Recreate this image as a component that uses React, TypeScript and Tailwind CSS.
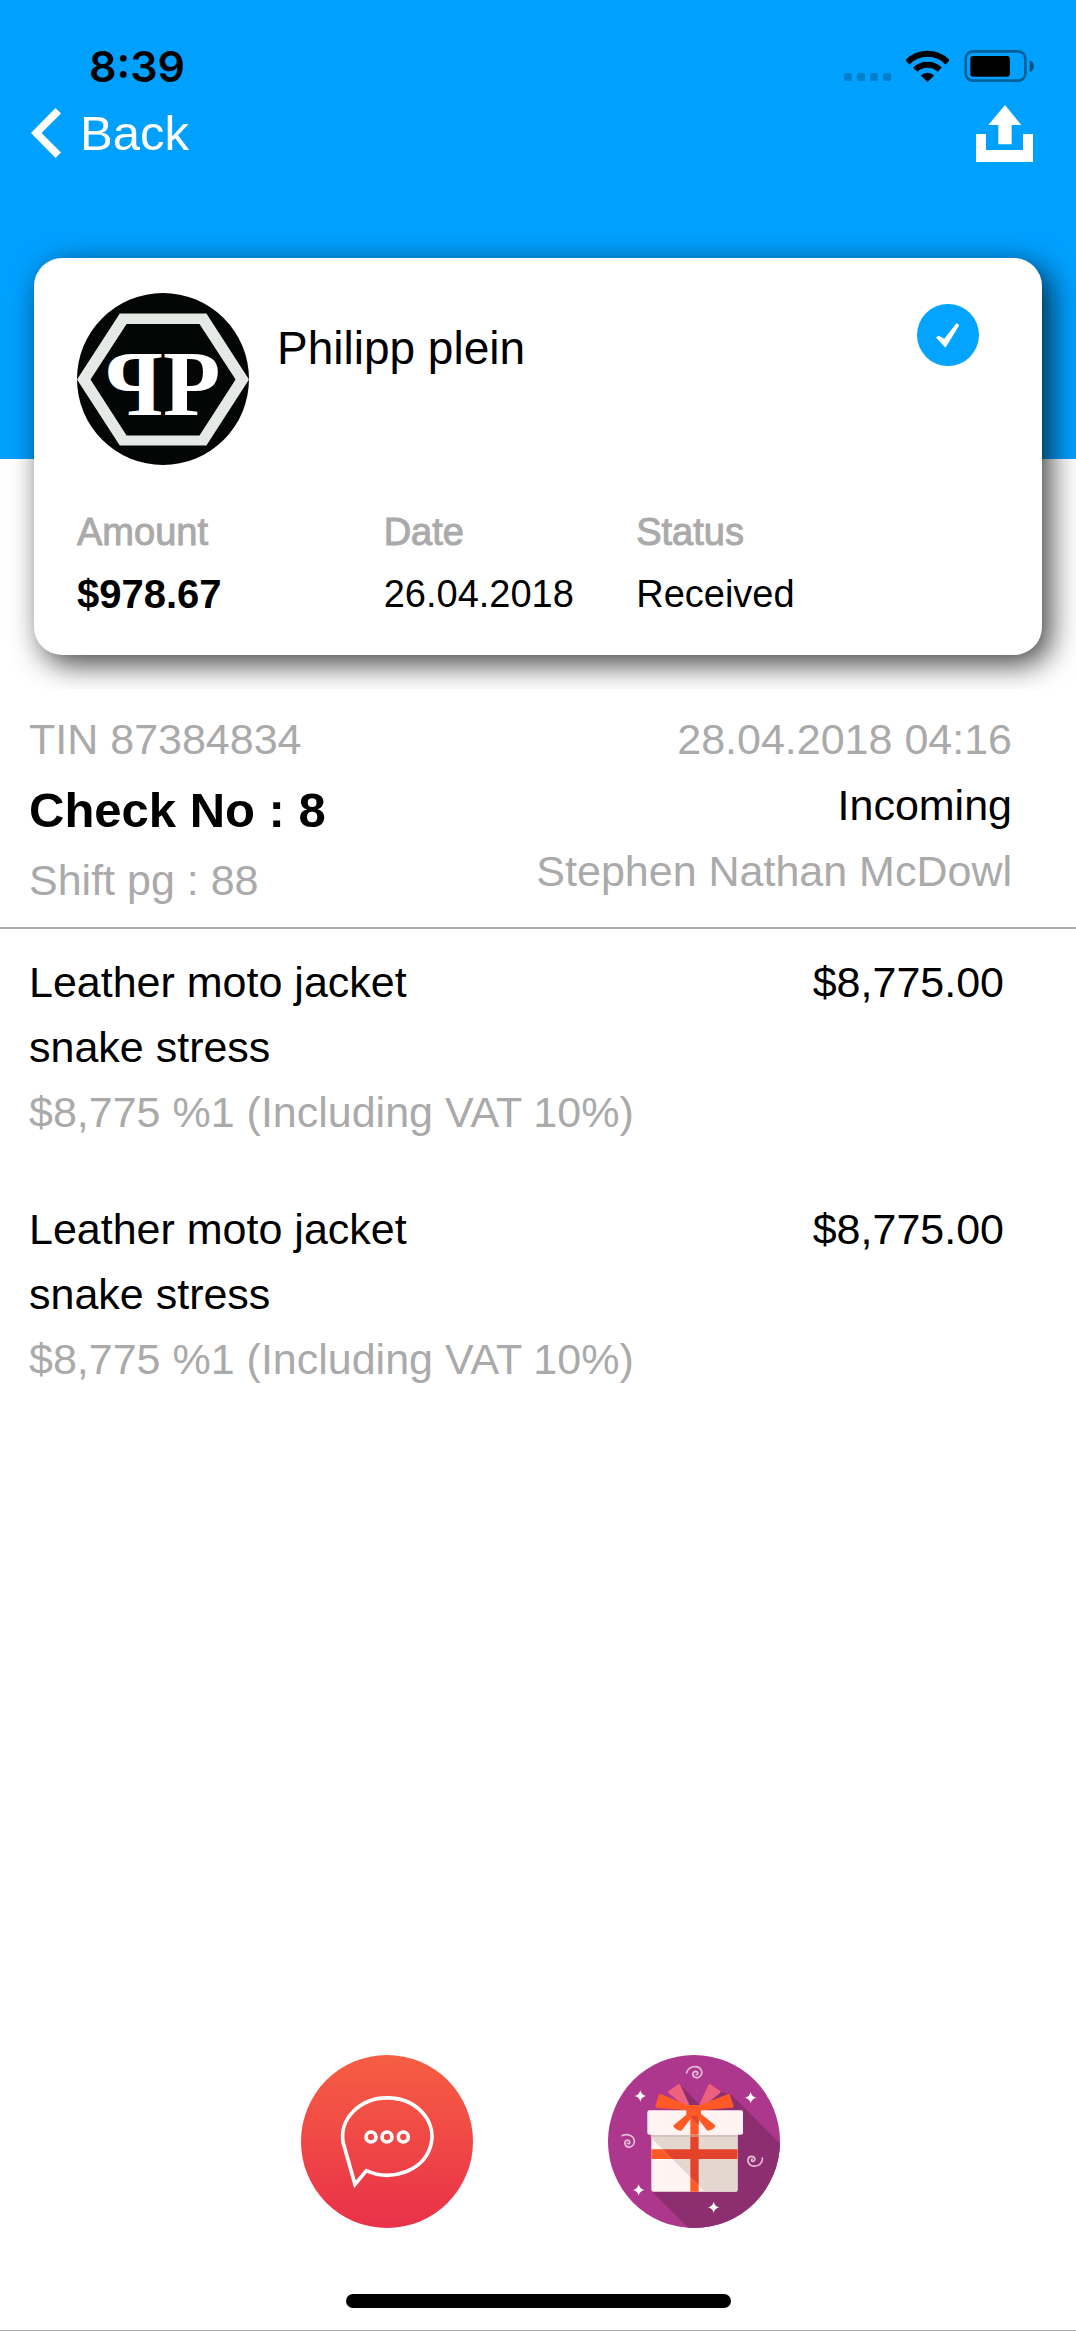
import React from "react";

const stats = [
  { label: "Amount", value: "$978.67", strong: true },
  { label: "Date", value: "26.04.2018", strong: false },
  { label: "Status", value: "Received", strong: false },
];

const items = [
  {
    id: 1,
    name: ["Leather moto jacket", "snake stress"],
    detail: "$8,775 %1 (Including VAT 10%)",
    price: "$8,775.00",
  },
  {
    id: 2,
    name: ["Leather moto jacket", "snake stress"],
    detail: "$8,775 %1 (Including VAT 10%)",
    price: "$8,775.00",
  },
];

function WifiIcon() {
  return (
    <svg viewBox="0 0 130 96" className="h-8 w-[43px]" aria-hidden="true">
      <path d="M4 37A85 85 0 0 1 126 37" fill="none" stroke="#000" strokeWidth="18" />
      <path d="M28 59A53 53 0 0 1 102 59" fill="none" stroke="#000" strokeWidth="18" />
      <path d="M65 96L45 77A28 28 0 0 1 85 77Z" />
    </svg>
  );
}

function BatteryIcon() {
  return (
    <svg viewBox="0 0 210 97" className="h-8 w-[70px]" aria-hidden="true">
      <rect x="4" y="4" width="181" height="89" rx="22" fill="none" stroke="#000" strokeOpacity="0.4" strokeWidth="8" />
      <rect x="18" y="18" width="120" height="63" rx="9" />
      <path d="M198 31Q210 36 210 49T198 67Z" fillOpacity="0.5" />
    </svg>
  );
}

function ShareIcon() {
  return (
    <svg viewBox="0 0 171 171" className="size-[57px]" fill="#fff" aria-hidden="true">
      <path d="M87 0L136 60H107V118H67V60H37Z" />
      <path d="M0 87H30V135H141V87H171V171H0Z" />
    </svg>
  );
}

function BrandLogo() {
  return (
    <svg viewBox="0 0 172 172" className="size-[172px] shrink-0" role="img" aria-label="Philipp plein logo">
      <circle cx="86" cy="86" r="86" fill="#040605" />
      <path
        d="M0 86.5L42.8 20.5H129.4L172 86.5L129.4 152.5H42.8ZM13.5 86.5L49.6 142.500H122.500L158.600 86.500L122.500 31H49.600Z"
        fill="#e6e8e5"
        fillRule="evenodd"
      />
      <g fill="#fff" fontFamily="Liberation Serif, serif" fontSize="94" fontWeight="700">
        <text x="86" y="122">P</text>
        <text x="0" y="122" transform="translate(86 0) scale(-1 1)">P</text>
      </g>
    </svg>
  );
}

function CheckBadge() {
  return (
    <svg viewBox="0 0 62 62" className="mt-[11px] ml-auto size-[62px] shrink-0" role="img" aria-label="Confirmed">
      <circle cx="31" cy="31" r="31" fill="#02a4ff" />
      <path
        d="M20 33.500L21.500 32.500L27.500 35.800L39.800 20L41.300 21.300L28.300 42.500Z"
        fill="#fff"
        stroke="#fff"
        strokeWidth="1.500"
        strokeLinejoin="round"
      />
    </svg>
  );
}

function ChatIcon() {
  return (
    <svg viewBox="63 75 516 519" className="h-[173px] w-[172px]" aria-hidden="true">
      <defs>
        <linearGradient id="chat-bg" x1="0" y1="0" x2="0" y2="1">
          <stop offset="0" stopColor="#f65e43" />
          <stop offset="1" stopColor="#e93149" />
        </linearGradient>
      </defs>
      <ellipse cx="321" cy="334.5" rx="258" ry="259.500" fill="url(#chat-bg)" />
      <g fill="none" stroke="#fff" strokeWidth="11">
        <path d="M190 340L225 463L259 422A134 116 0 1 0 190 340Z" />
        <circle cx="273" cy="321" r="15" />
        <circle cx="321" cy="321" r="15" />
        <circle cx="370" cy="321" r="15" />
      </g>
    </svg>
  );
}

const STAR = "M0-17Q3-3 17 0Q3 3 0 17Q-3 3-17 0Q-3-3 0-17Z";

function GiftIcon() {
  return (
    <svg viewBox="54 75 516 519" className="h-[173px] w-[172px]" aria-hidden="true">
      <defs>
        <clipPath id="gift-disc">
          <ellipse cx="312" cy="334.5" rx="258" ry="259.500" />
        </clipPath>
        <clipPath id="gift-shade">
          <path d="M184 314H443V485H345L184 324Z" />
        </clipPath>
      </defs>
      <g clipPath="url(#gift-disc)">
        <rect x="54" y="75" width="516" height="519" fill="#ad378c" />
        <path d="M268 162L330 225L390 184L425 195L600 371V620H322L184 483L250 300Z" fill="#8c2e70" />
      </g>

      <rect x="184" y="300" width="259" height="185" rx="6" fill="#fff4f2" />
      <path d="M184 358H443V387H184ZM301 300H326V485H301Z" fill="#ff5a26" />
      <g clipPath="url(#gift-shade)">
        <rect x="184" y="300" width="259" height="185" rx="6" fill="#e4d7cf" />
        <path d="M184 358H443V387H184ZM301 300H326V485H301Z" fill="#e2432a" />
        <rect x="184" y="314" width="259" height="7" fill="#c9b5ae" fillOpacity="0.6" />
      </g>
      <rect x="172" y="241" width="287" height="73" rx="6" fill="#fff4f2" />
      <rect x="301" y="241" width="25" height="73" fill="#ff5a26" />
      <path d="M301 258H326V284Z" fill="#e2432a" />

      <g strokeLinejoin="round" strokeWidth="8">
        <path d="M238 186L267 166L293 222H282Z" fill="#ed617f" stroke="#ed617f" />
        <path d="M388 186L359 166L333 222H344Z" fill="#ed617f" stroke="#ed617f" />
        <g fill="#ff5a26" stroke="#ff5a26">
          <path d="M200 229L210 196L290 229V237Z" />
          <path d="M427 229L416 196L333 229V237Z" />
          <path d="M254 288L294 256L300 262L272 298Q262 298 254 288Z" />
          <path d="M372 288L332 256L326 262L354 298Q364 298 372 288Z" />
        </g>
      </g>
      <rect x="289" y="225" width="44" height="33" rx="4" fill="#ff5a26" />

      <g fill="#fff">
        <path d={STAR} transform="translate(151 198)" />
        <path d={STAR} transform="translate(482 203)" />
        <path d={STAR} transform="translate(146 480)" />
        <path d={STAR} transform="translate(371 532)" />
      </g>
      <g fill="none" stroke="#e3bdd8" strokeWidth="5" strokeLinecap="round">
        <path d="M290 128C296 108 324 104 333 119C341 134 326 147 315 142C304 136 308 124 317 124C326 125 325 134 319 134" />
        <path d="M96 317C116 308 134 321 133 336C131 352 112 356 106 345C101 332 112 327 118 333C122 340 115 345 112 339" />
        <path d="M517 384C518 403 500 412 485 407C470 400 471 381 483 379C496 378 498 392 490 394C484 395 483 388 487 387" />
      </g>
    </svg>
  );
}

export default function App() {
  return (
    <div className="flex min-h-screen flex-col border-b border-[#b2b2b2] bg-white font-['Liberation_Sans',Arial,sans-serif] text-black">
      <header className="bg-[#00a0ff] pt-12 pb-[297px]">
        <div className="flex h-9 items-center pr-[42px] pl-[89px]">
          <time className="font-['Inter',sans-serif] text-[43px] leading-9 font-semibold">8:39</time>
          <div className="mr-[15px] mb-[3px] ml-auto flex gap-[5px] self-end">
            {[0, 1, 2, 3].map((dot) => (
              <span key={dot} className="size-2 rounded-[2px] bg-black/20" />
            ))}
          </div>
          <WifiIcon />
          <div className="ml-[15px] flex">
            <BatteryIcon />
          </div>
        </div>
        <nav className="mt-5 flex h-[58px] items-center justify-between pr-[43px] pl-[31px] text-white">
          <button type="button" className="flex items-center gap-[19px] text-[49px] leading-[58px]">
            <svg viewBox="0 0 30 50" className="h-[50px] w-[30px]" fill="#fff" aria-hidden="true">
              <path d="M0 25L24.500 0L30 5.500L10.500 25L30 44.500L24.500 50Z" />
            </svg>
            Back
          </button>
          <button type="button" aria-label="Share">
            <ShareIcon />
          </button>
        </nav>
      </header>

      <main className="flex flex-col">
        <section className="mx-[34px] -mt-[201px] rounded-[28px] bg-white pt-[35px] pr-[63px] pb-[30px] pl-[43px] shadow-[8px_9px_30px_rgba(0,0,0,0.75)]">
          <div className="flex">
            <BrandLogo />
            <h1 className="mt-[25px] ml-7 text-[46px] leading-[60px]">Philipp plein</h1>
            <CheckBadge />
          </div>
          <dl className="mt-9 grid grid-cols-[34%_28%_auto] text-[38px] leading-[62px]">
            {stats.map((stat) => (
              <div key={stat.label}>
                <dt className="text-[#aaaaaa] [-webkit-text-stroke:1px_#aaaaaa]">{stat.label}</dt>
                <dd className={stat.strong ? "text-[40px] font-bold" : ""}>{stat.value}</dd>
              </div>
            ))}
          </dl>
        </section>

        <section className="relative mt-[34px] flex justify-between border-b-2 border-[#aaaaaa] bg-white/80 pt-[17px] pr-16 pb-[15px] pl-[29px] text-[43px] leading-[66px]">
          <div>
            <p className="text-[#aaaaaa]">TIN 87384834</p>
            <h2 className="text-[49px] leading-[76px] font-bold">Check No : 8</h2>
            <p className="leading-[64px] text-[#aaaaaa]">Shift pg : 88</p>
          </div>
          <div className="text-right">
            <p className="text-[#aaaaaa]">28.04.2018 04:16</p>
            <p>Incoming</p>
            <p className="text-[#aaaaaa]">Stephen Nathan McDowl</p>
          </div>
        </section>

        <ul className="flex flex-col gap-[52px] pt-[21px] pr-[72px] pl-[29px] text-[43px] leading-[65px]">
          {items.map((item) => (
            <li key={item.id} className="flex justify-between">
              <div>
                {item.name.map((line) => (
                  <p key={line}>{line}</p>
                ))}
                <p className="text-[#aaaaaa]">{item.detail}</p>
              </div>
              <p>{item.price}</p>
            </li>
          ))}
        </ul>
      </main>

      <footer className="mt-auto flex flex-col items-center pb-[22px]">
        <div className="flex gap-[135px] pl-1">
          <button type="button" aria-label="Open chat">
            <ChatIcon />
          </button>
          <button type="button" aria-label="Gifts">
            <GiftIcon />
          </button>
        </div>
        <div className="mt-[66px] h-[14px] w-[385px] rounded-full bg-black" />
      </footer>
    </div>
  );
}
